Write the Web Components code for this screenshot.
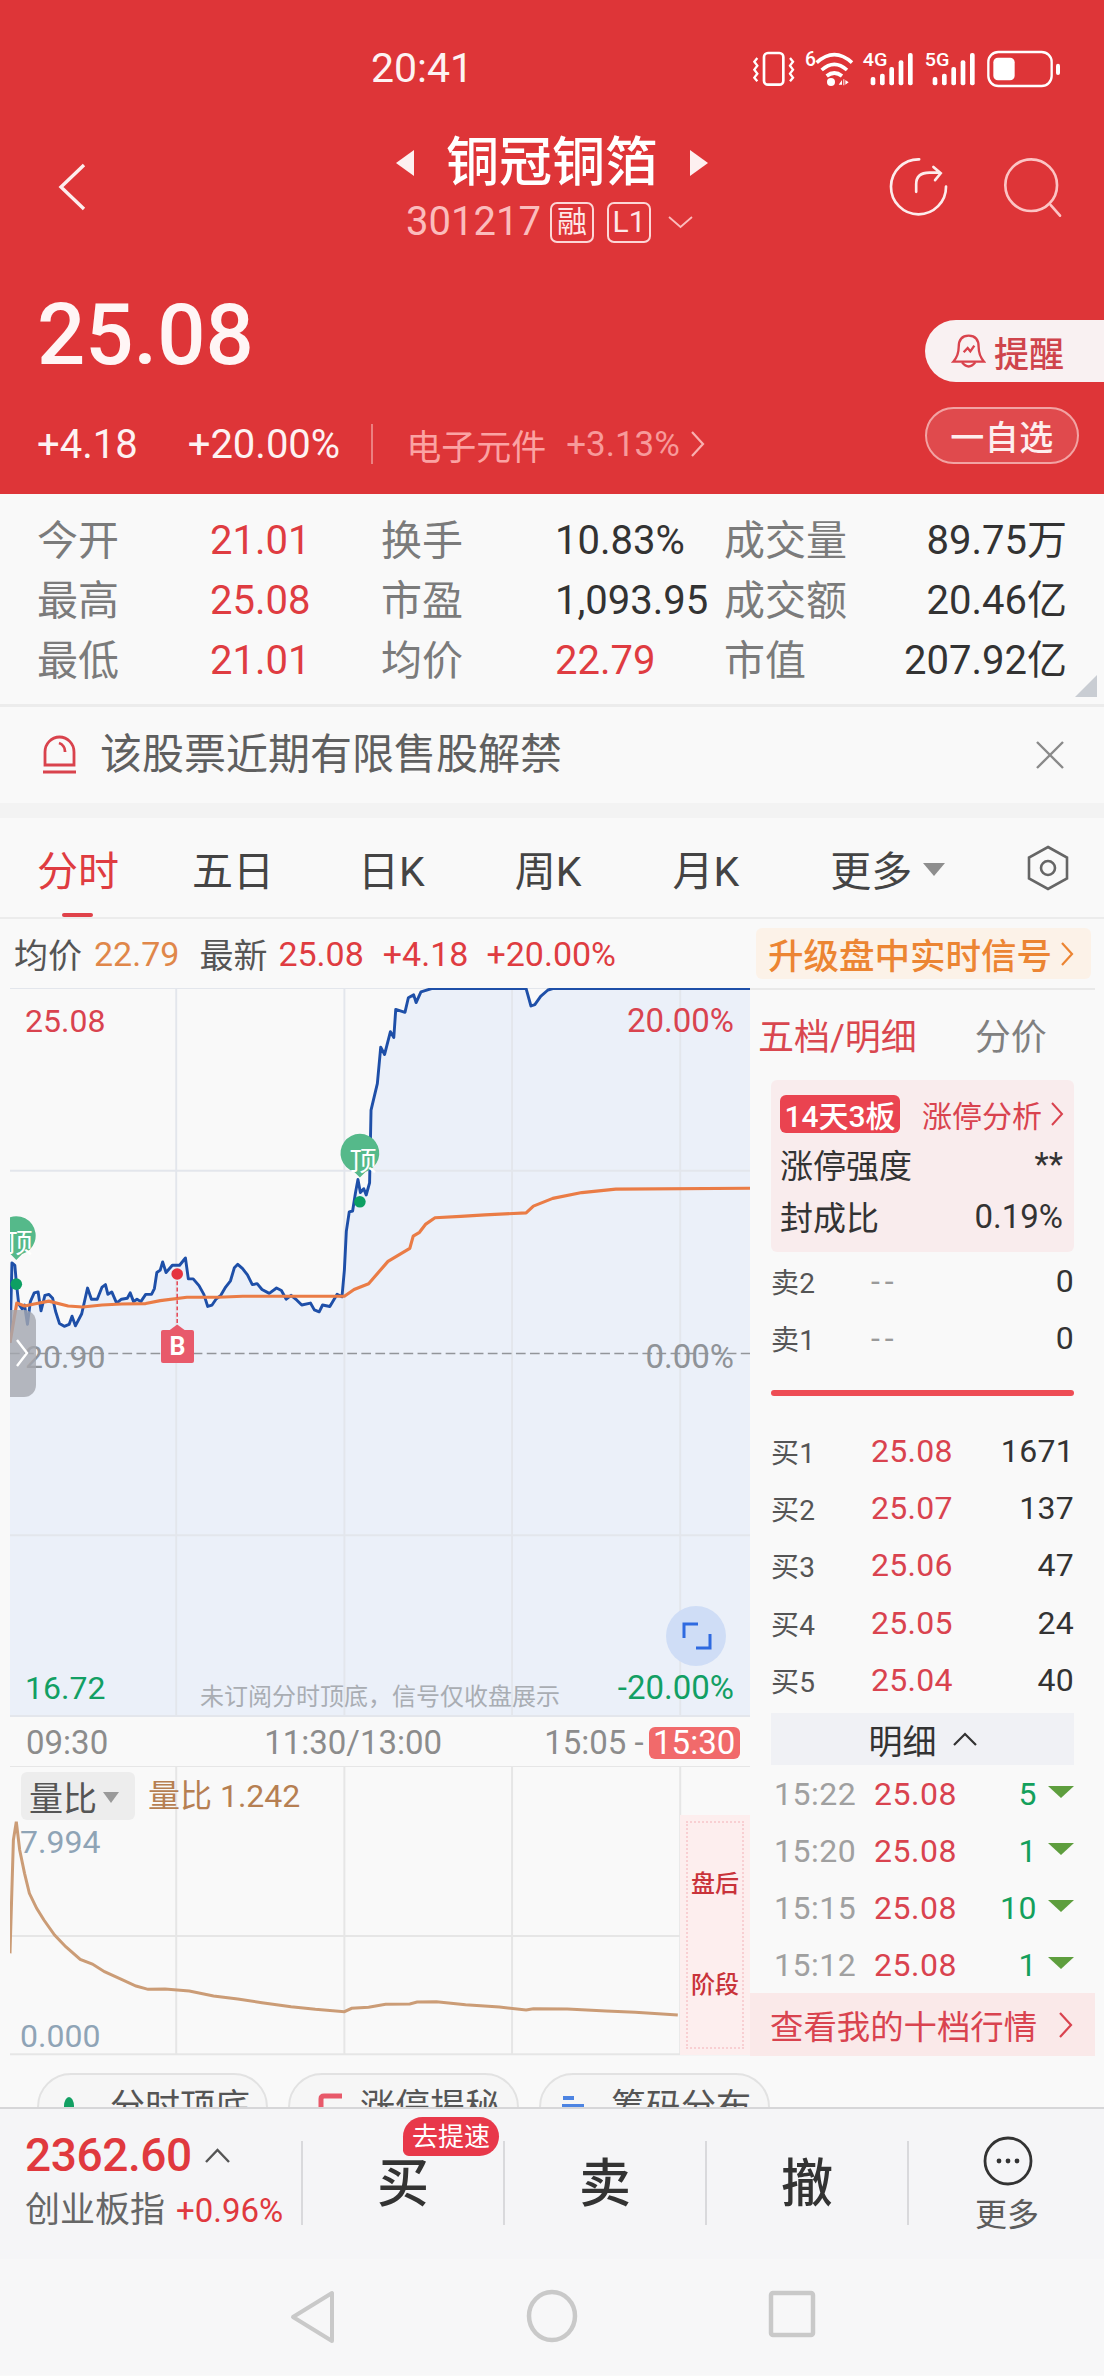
<!DOCTYPE html>
<html lang="zh"><head><meta charset="utf-8"><title>铜冠铜箔</title>
<style>
html,body{margin:0;padding:0;background:#f9f9f9}
body{width:1104px;height:2376px;overflow:hidden;font-family:Roboto,"Noto Sans CJK SC",sans-serif;color:#333}
</style></head><body>
<stock-app></stock-app>
<script>
const F='Roboto,"Noto Sans CJK SC",sans-serif';
function def(name,css,html){
  customElements.define(name,class extends HTMLElement{
    constructor(){super();const r=this.attachShadow({mode:'open'});
      r.innerHTML='<style>:host{display:block;box-sizing:border-box;font-family:'+F.replace(/"/g,"'")+'}*{box-sizing:border-box}'+css+'</style>'+html;}
  });
}
def('status-bar',`:host{height:135px;display:flex;align-items:center;padding-left:371px;color:#fdf3f3}
.t{font-size:41px;width:369px;line-height:1;margin-top:2px}svg{display:block;margin-top:8px}`,
`<span class="t">20:41</span>
<svg width="340" height="60" viewBox="0 0 1020 180" fill="#fff" stroke="none">
<rect x="72" y="33" width="58" height="95" rx="12" fill="none" stroke="#fff" stroke-width="8"/>
<path d="M52 48l-9 11 9 12-9 12 9 12-9 12 9 11M150 48l9 11-9 12 9 12-9 12 9 12-9 11" fill="none" stroke="#fff" stroke-width="7"/>
<text x="195" y="72" font-size="58" font-weight="500" font-family="Roboto">6</text>
<path d="M230 62Q283 14 336 62M245 84Q283 50 321 84M260 102Q283 84 306 102" fill="none" stroke="#fff" stroke-width="11"/>
<circle cx="273" cy="120" r="12"/><path d="M296 128l10-14v14zM316 114l10 7-10 7zM310 112h3v18h-3z"/>
<text x="368" y="72" font-size="56" font-weight="500" font-family="Roboto" textLength="74" lengthAdjust="spacingAndGlyphs">4G</text>
<rect x="392" y="105" width="14" height="25" rx="6"/><rect x="420" y="95" width="14" height="35" rx="6"/><rect x="448" y="75" width="14" height="55" rx="6"/><rect x="476" y="55" width="14" height="75" rx="6"/><rect x="504" y="33" width="14" height="97" rx="6"/>
<text x="554" y="72" font-size="56" font-weight="500" font-family="Roboto" textLength="74" lengthAdjust="spacingAndGlyphs">5G</text>
<rect x="578" y="105" width="14" height="25" rx="6"/><rect x="606" y="95" width="14" height="35" rx="6"/><rect x="634" y="75" width="14" height="55" rx="6"/><rect x="662" y="55" width="14" height="75" rx="6"/><rect x="690" y="33" width="14" height="97" rx="6"/>
<rect x="745" y="30" width="190" height="102" rx="30" fill="none" stroke="#fff" stroke-width="7"/><rect x="760" y="47" width="64" height="68" rx="14"/><rect x="948" y="65" width="12" height="34" rx="6"/>
</svg>`);

def('nav-row',`:host{height:110px;display:grid;grid-template-columns:396px 312px 1fr;color:#fff}
.b{padding:28px 0 0 58px}svg{display:block}
.c{display:flex;flex-direction:column;align-items:center;padding-top:2px}
.ti{display:flex;align-items:center;height:52px;justify-content:space-between;width:100%}
.ti b{font-size:53px;font-weight:500;letter-spacing:0;line-height:52px}
.ti i{width:0;height:0;border-top:13px solid transparent;border-bottom:13px solid transparent;display:block}
.l{border-right:18px solid #fdf0f0}.r{border-left:18px solid #fdf0f0}
.s{display:flex;align-items:center;margin-top:12px;color:#fbbcbc;height:42px;width:100%;padding-left:10px}
.s span.n{font-size:40px;width:144px;line-height:1}
.bd{width:44px;height:41px;border:2px solid #fcd6d6;border-radius:7px;font-size:30px;display:flex;align-items:center;justify-content:center;color:#fde7e7;line-height:1}
.r2{display:flex;gap:52px;padding:21px 0 0 179px}`,
`<div class="b"><svg width="28" height="48" viewBox="0 0 28 48"><path d="M26 2L3 24l23 22" fill="none" stroke="#fdeeee" stroke-width="3.4"/></svg></div>
<div class="c"><div class="ti"><i class="l"></i><b>铜冠铜箔</b><i class="r"></i></div>
<div class="s"><span class="n">301217</span><span class="bd">融</span><span class="bd" style="margin-left:13px">L1</span>
<svg style="margin-left:17px" width="25" height="13" viewBox="0 0 25 13"><path d="M1 1l11.500 10L24 1" fill="none" stroke="#fbbcbc" stroke-width="1.800"/></svg></div></div>
<div class="r2">
<svg width="63" height="63" viewBox="50 45 190 190" fill="none" stroke="#fdecec" stroke-width="8" stroke-linecap="round"><path d="M147 55A83 83 0 1 0 228 137"/><path d="M138 153V130Q138 95 178 95H210M190 78L212 97L195 118"/></svg>
<svg width="63" height="63" viewBox="390 40 190 190" fill="none" stroke="#fcc4c4" stroke-width="8" stroke-linecap="round"><circle cx="478" cy="128" r="78"/><path d="M537 188L565 220"/></svg>
</div>`);

def('quote-row',`:host{height:249px;display:flex;justify-content:space-between;color:#fff}
.p{font-size:85px;font-weight:500;line-height:1;padding:48px 0 0 37px;color:#fff5f5}
.ch{display:flex;align-items:center;height:44px;margin-top:44px;padding-left:37px;font-size:40px;color:#fdf2f2;white-space:nowrap}
.ch .sep{width:2px;height:40px;background:#ec8080;margin:0 33px 0 31px}
.ch .d{color:#fba3a3;font-size:35px}.ch .d2{font-size:35px;margin-left:20px;color:#f79a9a}
.rt{width:179px;display:flex;flex-direction:column;align-items:flex-start;padding-top:75px}
.rm{width:179px;height:62px;background:#f9f1f2;border-radius:31px 0 0 31px;display:flex;align-items:center;padding-left:26px;color:#cf444c;font-size:35px;gap:8px;font-weight:500}
.zx{width:154px;height:57px;margin-top:25px;border:2px solid #f2a3a3;border-radius:29px;background:#e04a4d;display:flex;align-items:center;justify-content:center;color:#fdeeee;font-size:34px;font-weight:500;letter-spacing:.5px}
svg{display:block}`,
`<div><div class="p">25.08</div>
<div class="ch"><span>+4.18</span><span style="margin-left:50px">+20.00%</span><span class="sep"></span><span class="d">电子元件</span><span class="d2">+3.13%</span>
<svg style="margin-left:10px" width="16" height="28" viewBox="0 0 16 28"><path d="M2 2l11 12L2 26" fill="none" stroke="#f9b0b0" stroke-width="2.200"/></svg></div></div>
<div class="rt"><div class="rm"><svg width="35" height="35" viewBox="245 585 105 105" fill="none" stroke="#d9434d" stroke-width="7"><path d="M252 668Q268 650 268 625Q268 590 298 590Q328 590 328 625Q328 650 344 668Z"/><path d="M278 670Q298 695 318 670M283 640L295 627L303 637L315 620"/></svg>提醒</div>
<div class="zx">一自选</div></div>`);

def('stock-header',`:host{background:#de3538;height:494px}`,`<status-bar></status-bar><nav-row></nav-row><quote-row></quote-row>`);

def('stats-panel',`:host{height:213px;background:#f9f9f9;border-bottom:3px solid #ececec;padding-top:17px;position:relative;display:grid;grid-template-columns:173px 171px 174px 169px 343px;grid-auto-rows:60px;padding-left:37px;align-items:center}
.l{font-size:41px;color:#7b7b7b;line-height:60px}.v{font-size:40px;color:#333;line-height:60px}.r{color:#df3c41}
.wrap{display:flex;justify-content:space-between;width:343px;align-items:center}.wrap b{font-weight:400;font-size:40px;color:#333;line-height:60px}
.tri{position:absolute;right:7px;bottom:7px;width:0;height:0;border-left:22px solid transparent;border-bottom:22px solid #c9cdd3}`,
`<span class="l">今开</span><span class="v r">21.01</span><span class="l">换手</span><span class="v">10.83%</span><div class="wrap"><span class="l">成交量</span><b>89.75万</b></div>
<span class="l">最高</span><span class="v r">25.08</span><span class="l">市盈</span><span class="v">1,093.95</span><div class="wrap"><span class="l">成交额</span><b>20.46亿</b></div>
<span class="l">最低</span><span class="v r">21.01</span><span class="l">均价</span><span class="v r">22.79</span><div class="wrap"><span class="l">市值</span><b>207.92亿</b></div>
<i class="tri"></i>`);

def('alert-bar',`:host{height:111px;background:#f3f3f3;padding-bottom:15px}
.b{height:96px;background:#f9f9f9;display:flex;align-items:center;padding:0 40px 0 42px}
span{font-size:42px;color:#5f5f5f;margin-left:23px;flex:1;line-height:1}`,
`<div class="b"><svg width="35" height="40" viewBox="0 0 35 40" fill="none" stroke="#d9434d" stroke-width="2.800"><path d="M3 30V17a14.500 15 0 0 1 29 0V30ZM17 8a9 9 0 0 1 6 9M1 37H34"/></svg><span>该股票近期有限售股解禁</span>
<svg width="28" height="28" viewBox="0 0 28 28"><path d="M1 1l26 26M27 1L1 27" stroke="#8a8a8a" stroke-width="2.400" fill="none"/></svg></div>`);

def('tab-bar',`:host{height:101px;background:#f9f9f9;border-bottom:2px solid #ececec;display:flex;align-items:center;position:relative;font-size:41px;color:#444;white-space:nowrap}
.a{color:#df3c41;margin-left:37px}.u{position:absolute;left:62px;bottom:0;width:31px;height:4px;background:#e0424a;border-radius:2px}
svg{display:block}
.tr{width:0;height:0;border-left:11px solid transparent;border-right:11px solid transparent;border-top:13px solid #8e8e8e;margin:3px 0 0 11px}`,
`<span class="a">分时</span><span style="margin-left:73px">五日</span><span style="margin-left:84px">日K</span><span style="margin-left:90px">周K</span><span style="margin-left:91px">月K</span><span style="margin-left:91px">更多</span><i class="tr"></i>
<svg style="margin-left:81px" width="44" height="46" viewBox="0 0 44 46" fill="none" stroke="#666" stroke-width="2.600"><path d="M22 2L41 12.500V33.500L22 44L3 33.500V12.500Z"/><circle cx="22" cy="23" r="7"/></svg><i class="u"></i>`);

def('summary-row',`:host{height:69px;background:#f9f9f9;display:flex;align-items:center;padding-left:14px;font-size:34px;color:#555;position:relative;white-space:nowrap}
.o{color:#e0874a}.r{color:#df3c41}
.up{margin-left:auto;margin-right:13px;width:335px;height:51px;background:#fcf2e8;color:#ec8533;border-radius:6px;font-size:35.500px;font-weight:500;display:flex;align-items:center;padding-left:12px;gap:8px;white-space:nowrap}
.up svg{flex:none;display:block}`,
`<span>均价</span><span class="o" style="margin-left:12px">22.79</span><span style="margin-left:20px">最新</span><span class="r" style="margin-left:11px">25.08</span><span class="r" style="margin-left:19px">+4.18</span><span class="r" style="margin-left:18px">+20.00%</span>
<div class="up">升级盘中实时信号<svg width="15" height="26" viewBox="0 0 15 26"><path d="M2 2l10 11L2 24" fill="none" stroke="#ec8533" stroke-width="2.200"/></svg></div>`);

const blue="20,750 24,585 30,590 33,625 38,670 45,680 50,672 56,712 62,665 70,647 78,645 84,684 92,652 100,650 108,658 114,685 122,710 132,716 142,712 148,695 155,715 168,690 180,637 188,660 200,660 210,635 217,630 222,650 230,645 240,668 250,660 262,658 268,647 275,665 282,660 290,665 300,650 312,650 318,638 323,605 330,600 335,583 342,605 355,590 370,590 382,575 388,618 398,618 410,632 420,650 428,675 437,672 445,660 455,652 465,635 475,622 483,595 490,588 500,597 510,610 520,630 530,628 540,640 555,648 570,637 580,642 590,660 600,652 612,662 622,672 640,668 648,682 658,686 665,672 680,675 695,650 705,655 710,600 714,520 720,480 727,478 733,440 738,413 743,440 750,432 755,445 762,420 765,270 778,215 785,140 793,155 805,108 812,120 816,62 835,68 842,38 853,32 858,48 868,26 890,19 1085,19 1095,55 1103,52 1115,35 1130,22 1140,19 1547,19";
const orange="20,750 34,668 50,674 70,670 100,664 140,674 170,676 210,672 250,670 300,669 330,663 385,656 450,656 500,654 600,654 710,654 730,640 760,628 800,582 845,555 852,530 865,522 878,505 897,492 950,489 1000,486 1085,482 1100,468 1140,452 1200,440 1270,433 1547,431";
const pin=(x,y)=>`<path d="M${x} ${y+49}L${x-12} ${y+37}A40 40 0 1 1 ${x+12} ${y+37}Z" fill="#55b98a"/>`;
def('price-chart',`:host{height:729px;width:740px;position:relative;background:#f9f9f9;display:block}
svg{display:block;position:absolute;left:0;top:0}
span{position:absolute;font-size:32px;line-height:36px;white-space:nowrap}
.r{color:#d9434f}.g{color:#129f64}.y{color:#8f9398}.big{font-size:33px}.pin{color:#fff;font-size:27px;line-height:32px;width:34px;text-align:center}
.hd{position:absolute;left:0;top:322px;width:26px;height:87px;background:rgba(165,168,175,.8);border-radius:0 12px 12px 0}
.fs{position:absolute;left:656px;top:618px;width:60px;height:60px;border-radius:50%;background:#cfddf6}
.b{position:absolute;left:151px;top:342px;width:33px;height:33px;background:#e85a6b;color:#fff;font-weight:700;font-size:25px;display:flex;align-items:center;justify-content:center;border-radius:2px}`,
`<svg width="740" height="729" viewBox="20 18 1527 1504">
<rect x="20" y="18" width="1527" height="1504" fill="#f9f9f9"/>
<polygon points="20,1520 ${blue} 1547,1520" fill="#ebf0f9"/>
<g stroke="#e3e6ec" stroke-width="4" fill="none"><path d="M20 18H1547M20 395H1547M20 1147H1547M20 1520H1547M363 18V1520M710 18V1520M1056 18V1520M1403 18V1520"/></g>
<path d="M20 772H1547" stroke="#92959a" stroke-width="3" stroke-dasharray="20 9" fill="none"/>
<polyline points="${blue}" fill="none" stroke="#1e4fa8" stroke-width="6" stroke-linejoin="round"/>
<polyline points="${orange}" fill="none" stroke="#ea7c46" stroke-width="6.500" stroke-linejoin="round"/>
<clipPath id="c"><rect x="20" y="18" width="1527" height="1504"/></clipPath>
<g clip-path="url(#c)">${pin(33,530)}${pin(742,360)}</g>
<circle cx="33" cy="629" r="12" fill="#0d9f63"/><circle cx="742" cy="459" r="12" fill="#0d9f63"/>
<path d="M365 610V715" stroke="#e5404e" stroke-width="3" stroke-dasharray="8 5"/><circle cx="365" cy="608" r="12" fill="#e5343f"/>
<path d="M349 724L365 712L381 724Z" fill="#e85a6b"/>
</svg>
<span class="pin" style="left:336px;top:158px">顶</span><span class="pin" style="left:-8px;top:240px;width:34px;clip-path:inset(0 0 0 8px)">顶</span>
<span class="r" style="left:15px;top:15px">25.08</span><span class="r big" style="right:16px;top:15px">20.00%</span>
<span class="y" style="left:15px;top:351px">20.90</span><span class="y big" style="right:16px;top:351px">0.00%</span>
<span class="g" style="left:15px;top:682px">16.72</span><span class="g big" style="right:16px;top:682px">-20.00%</span>
<span style="left:190px;top:691px;font-size:24px;color:#a9adb3">未订阅分时顶底，信号仅收盘展示</span>
<div class="hd"><svg style="left:5px;top:28px" width="14" height="30" viewBox="0 0 14 30"><path d="M2 2l10 13L2 28" fill="none" stroke="#fff" stroke-width="2.400"/></svg></div>
<div class="b">B</div>
<div class="fs"><svg style="left:16px;top:15px" width="30" height="30" viewBox="0 0 30 30"><path d="M2 17V3H16M28 13V27H14" fill="none" stroke="#2f6ae0" stroke-width="3"/></svg></div>`);

def('time-axis',`:host{height:49px;width:740px;background:#f9f9f9;display:flex;align-items:center;font-size:33px;color:#8c8c8c;padding-left:16px;padding-top:2px;white-space:nowrap}
.e{background:#f16a6b;color:#fff;width:91px;height:32px;border-radius:6px;display:flex;align-items:center;justify-content:center;margin-left:5px}`,
`<span>09:30</span><span style="margin-left:156px">11:30/13:00</span><span style="margin-left:102px">15:05 -</span><span class="e">15:30</span>`);

def('ratio-chart',`:host{height:290px;width:740px;position:relative;background:#f9f9f9}
svg{position:absolute;left:0;top:0;display:block}
.btn{position:absolute;left:11px;top:6px;width:114px;height:48px;background:#ededed;border-radius:6px;display:flex;align-items:center;padding-left:8px;font-size:34px;color:#555}
.btn i{width:0;height:0;border-left:8px solid transparent;border-right:8px solid transparent;border-top:11px solid #9a9a9a;margin:3px 0 0 6px}
span{position:absolute;white-space:nowrap}
.v{left:138px;top:10px;font-size:32px;line-height:40px;color:#b67f52}
.n{font-size:32px;line-height:36px;color:#8fa4b6}
.aft{position:absolute;left:670px;top:49px;width:70px;height:240px;background:#fdeeee;padding:6px}
.aft div{height:100%;border:2px dotted #f8cfd2;display:flex;flex-direction:column;align-items:center;color:#c9333a;font-size:24px;line-height:32px;padding-top:45px;gap:69px}`,
`<svg width="740" height="290" viewBox="20 198 1527 870" preserveAspectRatio="none">
<path d="M20 198H1547M20 708H1403M20 1063H1547M363 198V1063M710 198V1063M1056 198V1063M1403 198V1063" stroke="#e6e6e6" stroke-width="2" vector-effect="non-scaling-stroke" fill="none"/>
<polyline points="20,760 27,420 33,365 40,450 50,520 60,580 75,625 90,660 112,705 135,740 165,778 190,792 215,815 250,838 280,858 305,868 340,867 390,873 440,888 490,897 540,908 600,920 650,928 710,935 725,925 760,922 795,913 845,912 860,906 900,905 960,914 1030,921 1085,930 1100,926 1170,927 1250,933 1310,937 1398,945" fill="none" stroke="#cb9c76" stroke-width="3" vector-effect="non-scaling-stroke"/>
</svg>
<div class="btn">量比<i></i></div><span class="v">量比 1.242</span>
<span class="n" style="left:10px;top:58px">7.994</span><span class="n" style="left:10px;top:252px">0.000</span>
<div class="aft"><div><b style="font-weight:500">盘后</b><b style="font-weight:500">阶段</b></div></div>`);

const bk=(l,p,q,red)=>`<div class="row"><span class="lb">${l}</span><span class="pr ${red?'r':'d'}">${p}</span><span class="q">${q}</span></div>`;
const dt=(t,q)=>`<div class="dr"><span class="tm">${t}</span><span class="pp">25.08</span><span class="qq">${q}</span><i></i></div>`;
def('order-book',`:host{width:345px;height:1068px;background:#f9f9f9;display:flex;flex-direction:column;border-top:2px solid #e9e9e9}
.tabs{height:90px;display:flex;align-items:center;font-size:36px;padding:0 0 3px 8px;flex:none}
.tabs b{font-weight:400;color:#d9474f}.tabs span{color:#808080;margin-left:58px}
.box{margin:0 21px;height:172px;background:#f9eced;border-radius:6px;padding:15px 11px 0 9px;font-size:33px;color:#333;flex:none}
.top{display:flex;align-items:center;height:38px;font-size:30px;color:#d9434f;white-space:nowrap;width:290px}
.top svg{flex:none}
.tag{width:120px;height:38px;background:#ea4350;color:#fff;border-radius:6px;display:flex;align-items:center;justify-content:center;margin-right:22px;font-weight:500;white-space:nowrap;flex:none}
.ln{display:flex;justify-content:space-between;align-items:center;height:52px}
.row{display:flex;align-items:center;margin:0 21px;height:57.200px;position:relative;font-size:32px;letter-spacing:.3px;flex:none}
.lb{color:#555;font-size:28px;width:100px;white-space:nowrap}.pr{width:90px}.r{color:#d9434f}.d{color:#9a9a9a;letter-spacing:5px}
.q{margin-left:auto;color:#333}
.bar{margin:24px 21px 26px;height:6px;border-radius:3px;background:#ee4d55;flex:none}
.mx{margin:5px 21px 0;height:52px;background:#f0f1f5;display:flex;align-items:center;justify-content:center;font-size:34px;color:#333;gap:16px;flex:none}
.dr{display:flex;align-items:center;height:57px;margin:0 21px 0 24px;font-size:32px;letter-spacing:.5px;flex:none}
.tm{color:#a0a0a0;width:100px}.pp{color:#d9434f}.qq{color:#14a05c;margin-left:auto}
.dr i{width:0;height:0;border-left:13px solid transparent;border-right:13px solid transparent;border-top:12px solid #5e9e3e;margin:-4px 0 0 11px}
.more{height:63px;background:#fae9e9;display:flex;align-items:center;padding-left:20px;font-size:33.400px;color:#d9434f;flex:none;white-space:nowrap}`,
`<div class="tabs"><b>五档/明细</b><span>分价</span></div>
<div class="box"><div class="top"><span class="tag">14天3板</span>涨停分析<svg style="margin-left:8px" width="14" height="26" viewBox="0 0 14 26"><path d="M2 2l10 11L2 24" fill="none" stroke="#d9434f" stroke-width="2"/></svg></div>
<div class="ln" style="margin-top:5px"><span>涨停强度</span><span>**</span></div><div class="ln"><span>封成比</span><span>0.19%</span></div></div>
${bk('卖2','--','0')}${bk('卖1','--','0')}<div class="bar"></div>
${bk('买1','25.08','1671',1)}${bk('买2','25.07','137',1)}${bk('买3','25.06','47',1)}${bk('买4','25.05','24',1)}${bk('买5','25.04','40',1)}
<div class="mx">明细<svg width="24" height="14" viewBox="0 0 24 14"><path d="M1 13L12 2l11 11" fill="none" stroke="#333" stroke-width="2.200"/></svg></div>
${dt('15:22','5')}${dt('15:20','1')}${dt('15:15','10')}${dt('15:12','1')}
<div class="more">查看我的十档行情<svg style="margin-left:21px;display:block" width="16" height="28" viewBox="0 0 16 28"><path d="M2 2l11 12L2 26" fill="none" stroke="#d9434f" stroke-width="2.200"/></svg></div>`);

def('chart-area',`:host{display:flex;padding-left:10px;height:1068px}.l{display:flex;flex-direction:column}`,
`<div class="l"><price-chart></price-chart><time-axis></time-axis><ratio-chart></ratio-chart></div><order-book></order-book>`);

def('pill-row',`:host{height:51px;background:#f9f9f9;overflow:hidden;display:flex;padding:17px 0 0 37px;gap:20px}
div{width:231px;height:70px;border:2px solid #e2e2e2;border-radius:34px 34px 0 0;background:#f6f6f6;display:flex;align-items:flex-start;font-size:35px;color:#555;padding:11px 0 0 19px;flex:none;white-space:nowrap;line-height:44px}
svg{display:block;flex:none}`,
`<div><svg width="22" height="40" viewBox="0 0 22 40" style="margin:4px 30px 0 0"><ellipse cx="11" cy="16" rx="5" ry="9" fill="#12a063"/><path d="M4 24L2 28M18 24L20 28" stroke="#e8596a" stroke-width="2"/></svg>分时顶底</div>
<div style="padding-left:28px"><svg width="24" height="40" viewBox="0 0 24 40" style="margin:7px 18px 0 0"><path d="M3 30V6Q3 3 6 3H24" fill="none" stroke="#e8596a" stroke-width="5"/></svg>涨停揭秘</div>
<div><svg width="24" height="40" viewBox="0 0 24 40" style="margin:9px 27px 0 0"><path d="M3 3H14M2 11H24" stroke="#4d84e2" stroke-width="4" fill="none"/></svg>筹码分布</div>`);

def('trade-bar',`:host{height:152px;background:#f5f5f7;border-top:2px solid #d6d6d8;display:grid;grid-template-columns:301px 202px 202px 202px 197px;align-items:stretch;position:relative}
.ix{padding:24px 0 0 25px}.a{display:flex;align-items:center;font-size:46px;font-weight:500;color:#e0393e;height:44px;line-height:1;letter-spacing:-.4px}.b{display:flex;align-items:center;margin-top:16px;font-size:35px;color:#666;white-space:nowrap;line-height:1}.b em{font-style:normal;color:#e0393e;font-size:33px;margin-left:11px}
.c{border-left:2px solid #d9d9dc;height:84px;margin-top:32px;display:flex;align-items:center;justify-content:center;font-size:52px;font-weight:500;color:#333;padding-top:3px;position:relative;line-height:1}
.tag{position:absolute;left:403px;top:8px;width:96px;height:39px;background:#e8384a;color:#fff;font-size:26px;display:flex;align-items:center;justify-content:center;border-radius:20px 20px 20px 6px;white-space:nowrap;line-height:1}
.m{border-left:2px solid #d9d9dc;height:84px;margin-top:32px;display:block;position:relative}
.m svg{position:absolute;left:74px;top:-5px;display:block}.m span{position:absolute;left:66px;top:54px;font-size:32px;color:#5c5c5c;line-height:40px;white-space:nowrap}`,
`<div class="ix"><div class="a">2362.60<svg style="margin-left:13px" width="25" height="15" viewBox="0 0 25 15"><path d="M1 14L12.500 2 24 14" fill="none" stroke="#555" stroke-width="2.400"/></svg></div><div class="b">创业板指<em>+0.96%</em></div></div>
<div class="c">买</div><div class="c">卖</div><div class="c">撤</div>
<div class="m"><svg width="50" height="50" viewBox="0 0 50 50" fill="none"><circle cx="25" cy="25" r="23" stroke="#333" stroke-width="2.800"/><circle cx="16" cy="25" r="2.400" fill="#333"/><circle cx="25" cy="25" r="2.400" fill="#333"/><circle cx="34" cy="25" r="2.400" fill="#333"/></svg><span>更多</span></div>
<div class="tag">去提速</div>`);

def('sys-nav',`:host{height:116px;background:#f7f7f8;display:flex;align-items:flex-start;padding:30px 0 0 288px;gap:190px}
svg{display:block}`,
`<svg width="48" height="56" viewBox="0 0 48 56" fill="none" stroke="#c9c9c9" stroke-width="4" stroke-linejoin="round"><path d="M44 4V52L5 28Z"/></svg>
<svg width="52" height="54" viewBox="0 0 52 54" fill="none" stroke="#c9c9c9" stroke-width="4.500"><ellipse cx="26" cy="27" rx="23" ry="24"/></svg>
<svg width="48" height="50" viewBox="0 0 48 50" fill="none" stroke="#c9c9c9" stroke-width="4.500"><rect x="3" y="4" width="42" height="42" rx="2"/></svg>`);

def('stock-app',`:host{width:1104px;height:2376px;overflow:hidden;display:block}`,
`<stock-header></stock-header><stats-panel></stats-panel><alert-bar></alert-bar><tab-bar></tab-bar><summary-row></summary-row><chart-area></chart-area><pill-row></pill-row><trade-bar></trade-bar><sys-nav></sys-nav>`);
</script></body></html>
